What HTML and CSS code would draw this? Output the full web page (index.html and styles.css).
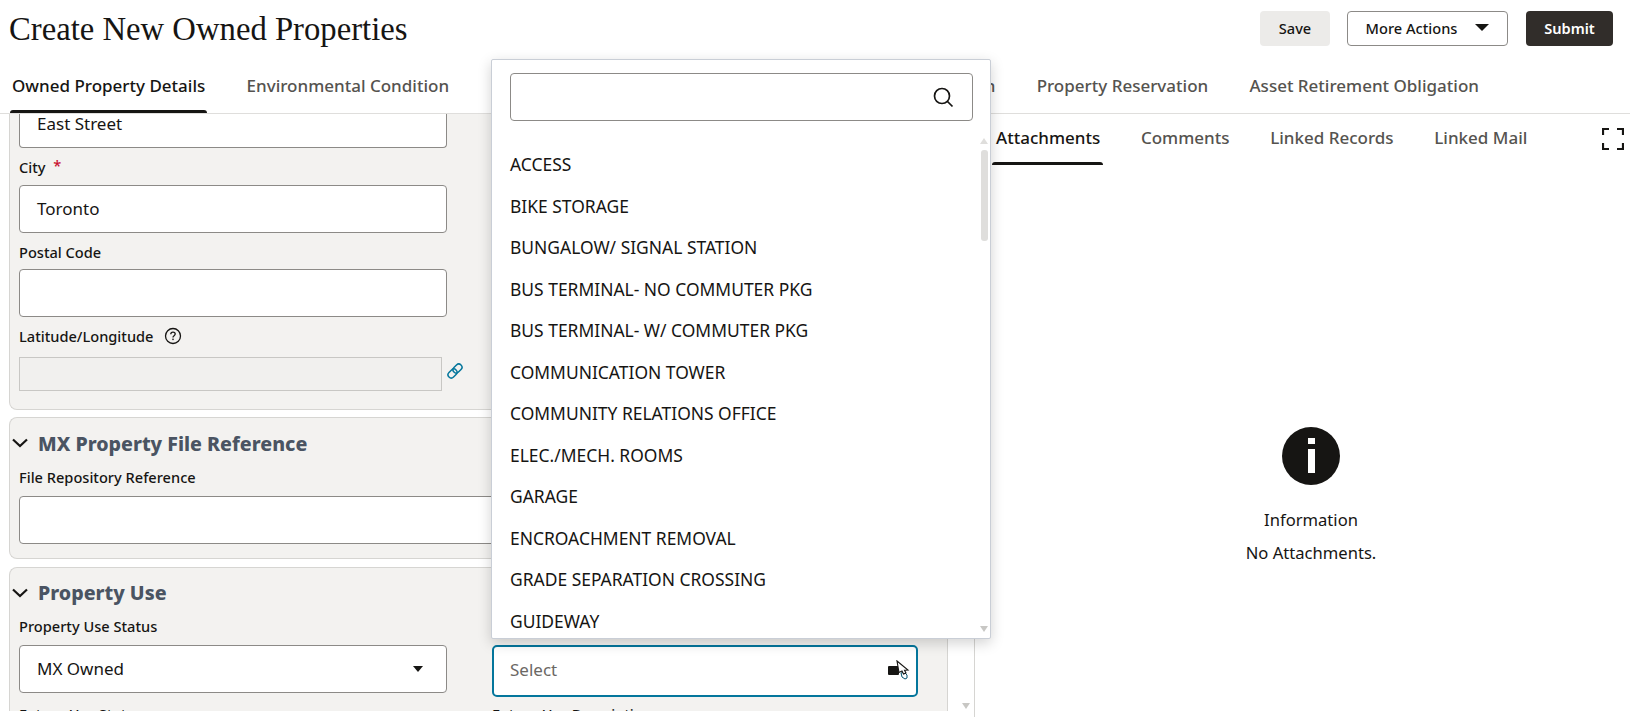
FILE: index.html
```html
<!DOCTYPE html>
<html lang="en">
<head>
    <meta charset="UTF-8">
    <meta name="viewport" content="width=device-width, initial-scale=1.0">
    <title>Create New Owned Properties</title>
    <link rel="stylesheet" href="styles.css">
</head>
<body>
    <div class="page">
        <div class="top-bar">
            <h1 class="page-title">Create New Owned Properties</h1>
            <div class="actions">
                <button class="btn btn-save">Save</button>
                <button class="btn btn-more">More Actions <span class="caret"></span></button>
                <button class="btn btn-submit">Submit</button>
            </div>
        </div>
        <div class="main-tabs">
            <div class="main-tab active">Owned Property Details</div>
            <div class="main-tab">Environmental Condition</div>
            <div class="main-tab hidden-tab">Property Disposition</div>
            <div class="main-tab">Property Reservation</div>
            <div class="main-tab">Asset Retirement Obligation</div>
        </div>
        <div class="columns">
            <div class="left-pane">
                <div class="scroll-area">
                    <div class="card card-first">
                        <div class="input input-cut">East Street</div>
                        <div class="label">City <span class="req">*</span></div>
                        <div class="input">Toronto</div>
                        <div class="label">Postal Code</div>
                        <div class="input"></div>
                        <div class="label label-help">Latitude/Longitude
                            <svg class="help" width="18" height="18" viewBox="0 0 18 18"><circle cx="9" cy="9" r="7.500" fill="none" stroke="#161513" stroke-width="1.3"/><path d="M6.800 7.200c0-1.300 1-2 2.200-2s2.200.8 2.200 1.900c0 1.600-2.200 1.600-2.200 3.300" fill="none" stroke="#161513" stroke-width="1.3"/><rect x="8.300" y="11.600" width="1.400" height="1.500" fill="#161513"/></svg>
                        </div>
                        <div class="geo-row">
                            <div class="input-disabled"></div>
                            <svg class="link-icon" width="18" height="18" viewBox="0 0 18 18" fill="none" stroke="#04769c" stroke-width="1.5"><g transform="rotate(-45 9 9)"><rect x="0.500" y="5.800" width="10" height="6.400" rx="3.200"/><rect x="7.500" y="5.800" width="10" height="6.400" rx="3.200"/></g></svg>
                        </div>
                    </div>
                    <div class="card">
                        <div class="card-head">
                            <svg class="chevron" width="16" height="10" viewBox="0 0 16 10"><path d="M1 1.500l7 6.500 7-6.500" fill="none" stroke="#161513" stroke-width="2.200"/></svg>
                            <h2>MX Property File Reference</h2>
                        </div>
                        <div class="label">File Repository Reference</div>
                        <div class="input input-wide"></div>
                    </div>
                    <div class="card card-last">
                        <div class="card-head">
                            <svg class="chevron" width="16" height="10" viewBox="0 0 16 10"><path d="M1 1.500l7 6.500 7-6.500" fill="none" stroke="#161513" stroke-width="2.200"/></svg>
                            <h2>Property Use</h2>
                        </div>
                        <div class="label">Property Use Status</div>
                        <div class="two-col">
                            <div class="input select">MX Owned <span class="caret"></span></div>
                            <div class="input select focused">Select</div>
                        </div>
                        <div class="two-col two-col-labels">
                            <div class="label">Future Use Status</div>
                            <div class="label">Future Use Description</div>
                        </div>
                    </div>
                </div>
                <div class="outer-scroll"><span class="arrow-down"></span></div>
            </div>
            <div class="right-pane">
                <div class="side-tabs">
                    <div class="side-tab active">Attachments</div>
                    <div class="side-tab">Comments</div>
                    <div class="side-tab">Linked Records</div>
                    <div class="side-tab">Linked Mail</div>
                    <svg class="expand" width="22" height="22" viewBox="0 0 22 22" fill="none" stroke="#161513" stroke-width="2.200"><path d="M1 7V1h6M15 1h6v6M21 15v6h-6M7 21H1v-6"/></svg>
                </div>
                <div class="empty-state">
                    <svg width="58" height="58" viewBox="0 0 58 58"><circle cx="29" cy="29" r="29" fill="#161513"/><rect x="26" y="11" width="7" height="6" fill="#fff"/><rect x="26" y="22" width="7" height="24" fill="#fff"/></svg>
                    <div class="empty-title">Information</div>
                    <div class="empty-text">No Attachments.</div>
                </div>
            </div>
        </div>
    </div>

    <!-- open dropdown of the Future Use field, lies over the form -->
    <div class="dropdown">
        <div class="search-box">
            <svg width="24" height="24" viewBox="0 0 24 24" fill="none" stroke="#161513" stroke-width="1.700"><circle cx="11" cy="11" r="7.500"/><path d="M16.500 16.500l5 5"/></svg>
        </div>
        <div class="list">
            <div class="item">ACCESS</div>
            <div class="item">BIKE STORAGE</div>
            <div class="item">BUNGALOW/ SIGNAL STATION</div>
            <div class="item">BUS TERMINAL- NO COMMUTER PKG</div>
            <div class="item">BUS TERMINAL- W/ COMMUTER PKG</div>
            <div class="item">COMMUNICATION TOWER</div>
            <div class="item">COMMUNITY RELATIONS OFFICE</div>
            <div class="item">ELEC./MECH. ROOMS</div>
            <div class="item">GARAGE</div>
            <div class="item">ENCROACHMENT REMOVAL</div>
            <div class="item">GRADE SEPARATION CROSSING</div>
            <div class="item">GUIDEWAY</div>
        </div>
        <div class="list-scroll">
            <span class="arrow-up"></span>
            <span class="thumb"></span>
            <span class="arrow-down"></span>
        </div>
    </div>

    <!-- mouse pointer caught on the screenshot -->
    <div class="busy-cursor">
        <span class="cursor-block"></span>
        <svg width="14" height="21" viewBox="0 0 14 21"><path d="M5 13l3-1 3 3 0 3-2 1-3-2z" fill="#fff" stroke="#04536f" stroke-width="1"/><path d="M1 1l11 9-3.500.3 1.500 2.700-2.500 1-1.500-3-3 1.500z" fill="#fff" stroke="#161513" stroke-width="1.100"/></svg>
    </div>
</body>
</html>
```

FILE: styles.css
```css
*{
    box-sizing: border-box;
}
html, body{
    margin: 0;
    height: 100%;
    overflow: hidden;
    background-color: #ffffff;
}
body{
    font-family: "Noto Sans", sans-serif;
    color: #161513;
}
.page{
    height: 723px;
    display: flex;
    flex-direction: column;
}

/* top bar */
.top-bar{
    height: 58px;
    display: flex;
    align-items: flex-start;
    justify-content: space-between;
    padding: 11px 17px 0 9px;
}
.page-title{
    margin: 0;
    font-family: "Liberation Serif", serif;
    font-weight: 400;
    font-size: 32.7px;
    line-height: 36px;
}
.actions{
    display: flex;
    gap: 17px;
}
.btn{
    height: 35px;
    border-radius: 4px;
    border: 1px solid transparent;
    font-family: inherit;
    font-size: 14.6px;
    font-weight: 500;
    padding: 0 0 2px 0;
    color: #161513;
}
.btn-save{
    width: 70px;
    background-color: #ecebe9;
}
.btn-more{
    width: 161px;
    background-color: #ffffff;
    border-color: #8c8a87;
    display: flex;
    align-items: center;
    justify-content: center;
    gap: 18px;
}
.btn-submit{
    width: 87px;
    margin-left: 1px;
    background-color: #312d2a;
    color: #ffffff;
    font-weight: 600;
}
.caret{
    width: 0;
    height: 0;
    border-left: 7px solid transparent;
    border-right: 7px solid transparent;
    border-top: 7px solid #161513;
}

/* tabs under the title */
.main-tabs{
    height: 56px;
    display: flex;
    gap: 41.3px;
    padding-left: 12px;
    border-bottom: 1px solid #dfdedc;
}
.main-tab{
    font-size: 17px;
    font-weight: 500;
    line-height: 55px;
    color: #55534f;
}
.main-tab.active{
    color: #161513;
    position: relative;
}
.main-tab.active::after{
    content: "";
    position: absolute;
    left: -2px;
    right: -2px;
    bottom: 0;
    height: 3px;
    background-color: #161513;
    border-radius: 3px 3px 0 0;
}
.hidden-tab{
    width: 505px;
    text-align: right;
    white-space: nowrap;
}

/* form side */
.columns{
    height: 609px;
    display: flex;
}
.left-pane{
    width: 975px;
    display: flex;
    height: 603px;
    overflow: hidden;
}
.scroll-area{
    width: 948px;
    height: 597px;
    overflow: hidden;
    padding-left: 9px;
    border-right: 1px solid #d6d5d2;
}
.card{
    background-color: #f3f2f0;
    border: 1px solid #d6d5d2;
    border-right: 0;
    border-radius: 8px 0 0 8px;
    margin-bottom: 8px;
    padding: 0 0 14px 9px;
}
.card-first{
    border-top: 0;
    border-radius: 0 0 0 8px;
    height: 296px;
    margin-bottom: 7px;
}
.card-last{
    margin-bottom: 0;
}
.card-head{
    display: flex;
    align-items: center;
    gap: 10px;
    height: 50px;
    margin-left: -7px;
}
.card-last .card-head{
    height: 49px;
}
.card-head h2{
    margin: 0;
    font-size: 19.6px;
    font-weight: 800;
    color: #4a5462;
}
.label{
    font-size: 14.6px;
    font-weight: 500;
    line-height: 20px;
    margin: 9px 0 7px;
}
.card-head + .label{
    margin: -1px 0 9px;
}
.input-cut + .label{
    margin-bottom: 8px;
}
.two-col-labels .label{
    margin-top: 7px;
}
.req{
    color: #c8102e;
    margin-left: 4px;
    line-height: 0;
    vertical-align: 2px;
}
.label-help{
    display: flex;
    align-items: center;
    gap: 11px;
    margin-bottom: 11px;
}
.input{
    width: 428px;
    height: 48px;
    background-color: #ffffff;
    border: 1px solid #8c8a87;
    border-radius: 4px;
    padding: 0 17px;
    font-size: 17px;
    line-height: 46px;
}
.input-cut{
    height: 34px;
    line-height: 19px;
    border-top: 0;
    border-radius: 0 0 4px 4px;
}
.input-wide{
    width: 700px;
}
.geo-row{
    display: flex;
    align-items: center;
    gap: 4px;
}
.link-icon{
    margin-top: -6px;
}
.input-disabled{
    width: 423px;
    height: 34px;
    background-color: #f1f0ee;
    border: 1px solid #c8c7c4;
}
.two-col{
    display: grid;
    grid-template-columns: 428px 426px;
    gap: 45px;
    align-items: start;
}
.select{
    display: flex;
    align-items: center;
    justify-content: space-between;
}
.select .caret{
    border-left-width: 5px;
    border-right-width: 5px;
    border-top-width: 6px;
    margin-right: 6px;
}
.focused{
    width: 100%;
    height: 52px;
    border: 2px solid #04769c;
    border-radius: 5px;
    color: #6b6864;
    padding: 0 16px 2px;
}
.outer-scroll{
    width: 27px;
    position: relative;
    border-right: 1px solid #d6d5d2;
}
.outer-scroll .arrow-down{
    position: absolute;
    left: 14px;
    bottom: 8px;
}
.arrow-down{
    display: block;
    width: 0;
    height: 0;
    border-left: 4px solid transparent;
    border-right: 4px solid transparent;
    border-top: 6px solid #c8c7c4;
}
.arrow-up{
    display: block;
    width: 0;
    height: 0;
    border-left: 4px solid transparent;
    border-right: 4px solid transparent;
    border-bottom: 6px solid #dfdedc;
}

/* attachments side */
.right-pane{
    flex: 1;
    display: flex;
    flex-direction: column;
}
.side-tabs{
    height: 51px;
    display: flex;
    gap: 40.7px;
    padding-left: 21px;
    align-items: flex-start;
}
.side-tab{
    font-size: 17px;
    font-weight: 500;
    line-height: 48px;
    height: 51px;
    color: #55534f;
}
.side-tab.active{
    color: #161513;
    position: relative;
}
.side-tab.active::after{
    content: "";
    position: absolute;
    left: -4px;
    right: -3px;
    bottom: 0;
    height: 3px;
    background-color: #161513;
    border-radius: 3px 3px 0 0;
}
.expand{
    margin: 14px 6px 0 auto;
}
.empty-state{
    display: flex;
    flex-direction: column;
    align-items: center;
    padding-top: 262px;
    padding-left: 17px;
}
.empty-title, .empty-text{
    font-size: 16.6px;
    line-height: 24px;
}
.empty-title{
    margin-top: 23px;
}
.empty-text{
    margin-top: 9px;
}

/* dropdown over the form */
.dropdown{
    position: absolute;
    left: 491px;
    top: 59px;
    width: 500px;
    height: 580px;
    background-color: #ffffff;
    border: 1px solid #c9ced6;
    border-radius: 2px;
    box-shadow: 0 4px 14px rgba(0,0,0,0.18);
    overflow: hidden;
}
.search-box{
    margin: 13px 18px 0 18px;
    width: 463px;
    height: 48px;
    border: 1px solid #8c8a87;
    border-radius: 4px;
    display: flex;
    align-items: center;
    justify-content: flex-end;
    padding-right: 17px;
}
.list{
    margin: 23px 0 0 18px;
}
.item{
    height: 41.55px;
    line-height: 41.55px;
    font-size: 17.45px;
    white-space: nowrap;
    color: #161513;
}
.list-scroll{
    position: absolute;
    right: 2px;
    top: 78px;
    bottom: 6px;
    width: 8px;
    display: flex;
    flex-direction: column;
    align-items: center;
}
.thumb{
    width: 7px;
    height: 91px;
    margin-top: 6px;
    border-radius: 3px;
    background-color: #dfdedc;
    flex: none;
}
.list-scroll .arrow-down{
    margin-top: auto;
}

.busy-cursor{
    position: absolute;
    left: 888px;
    top: 660px;
    display: flex;
    align-items: flex-start;
}
.cursor-block{
    width: 11px;
    height: 9px;
    margin: 6px -3px 0 0;
    background-color: #161513;
    border-radius: 1px;
}
```
